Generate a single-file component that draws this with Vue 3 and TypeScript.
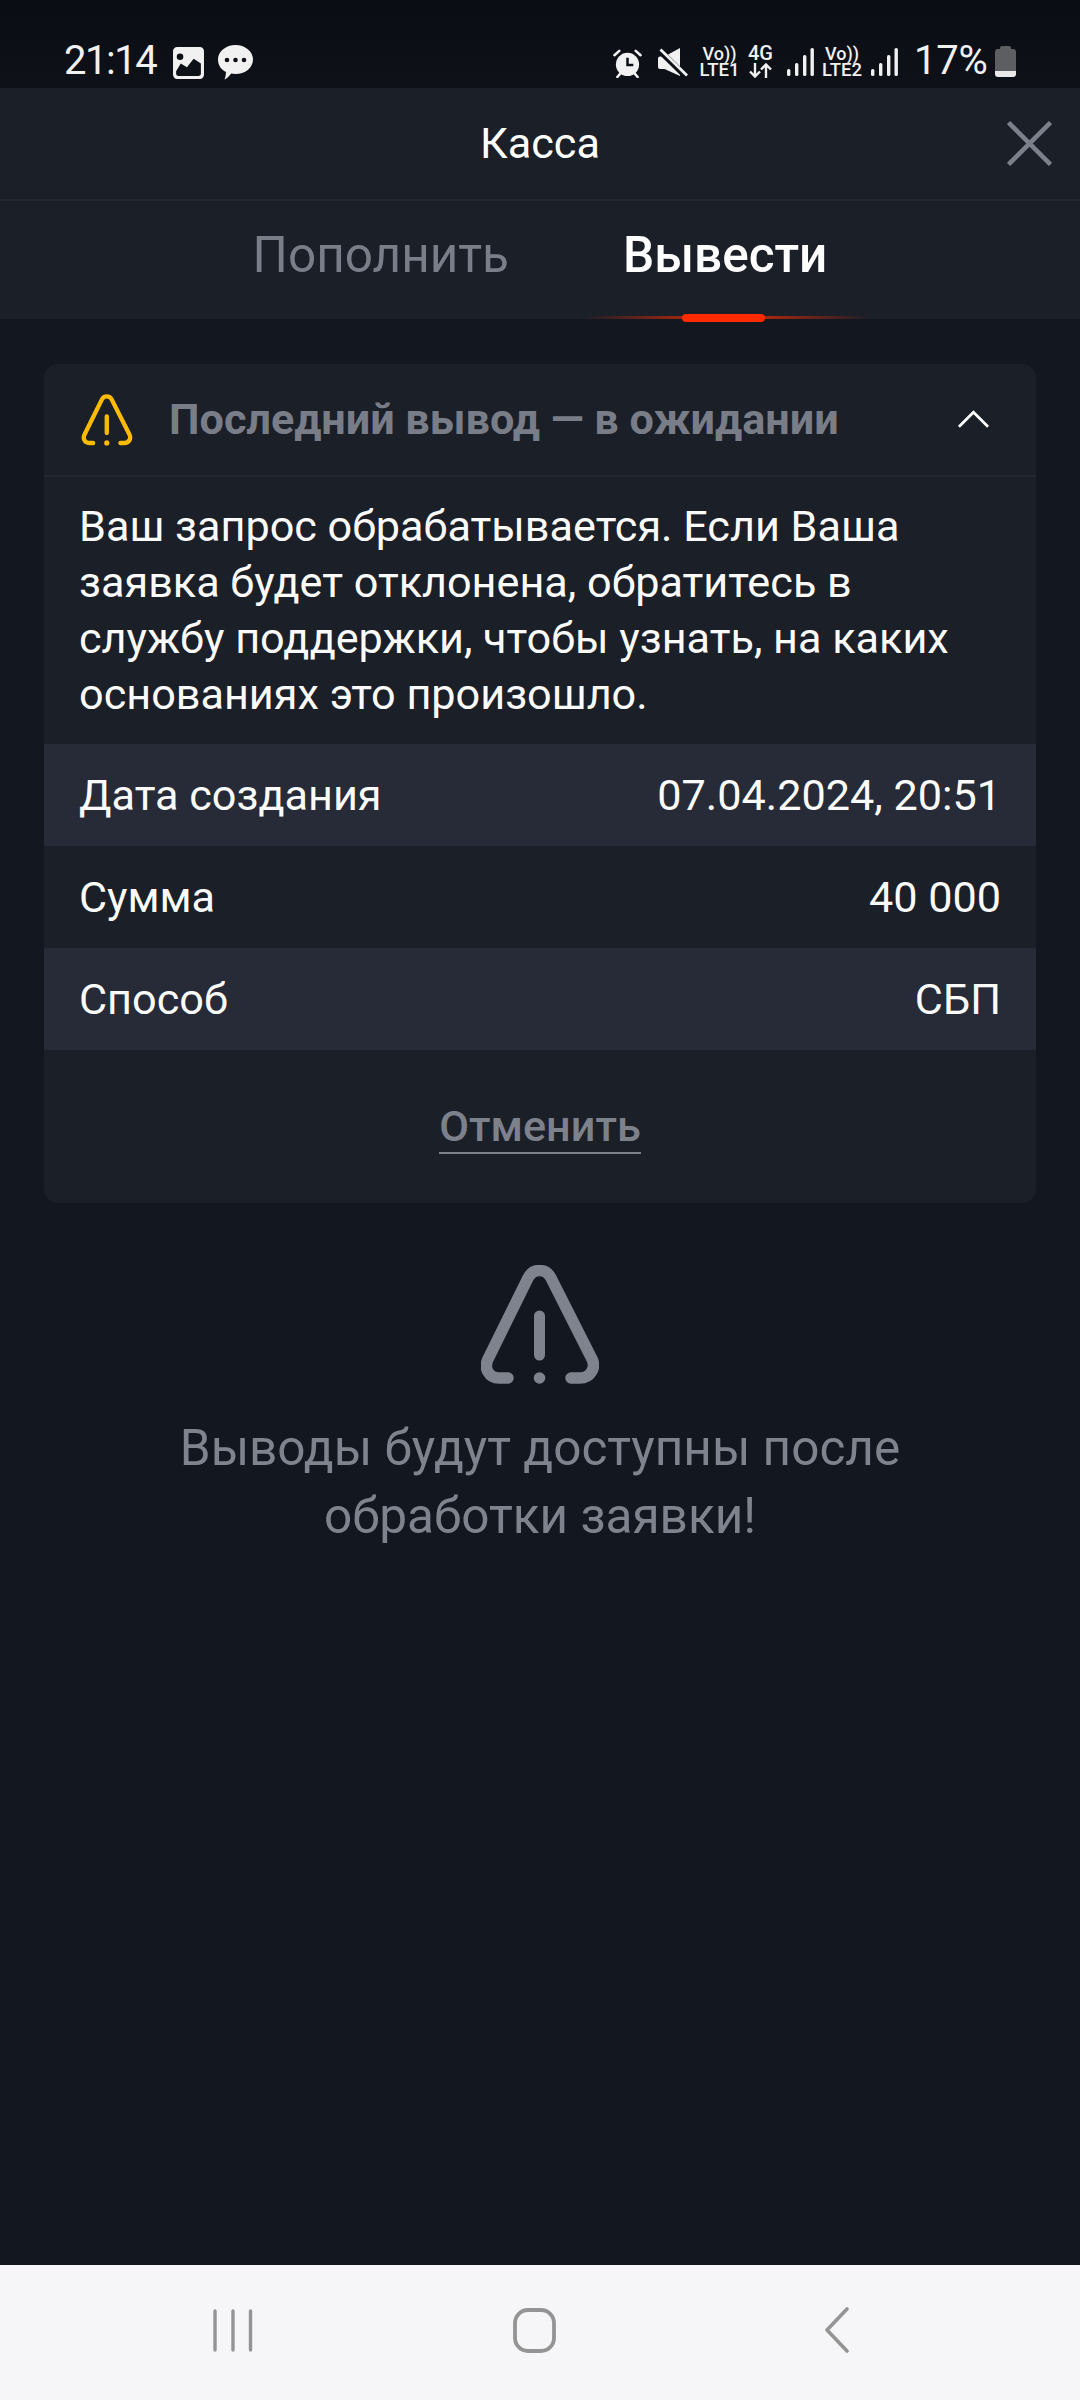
<template>
  <div class="screen">
    <!-- status bar -->
    <div class="status">
      <span class="clock">21:14</span>
      <svg class="ic-img" viewBox="0 0 30 31">
        <path fill-rule="evenodd" fill="#f1f1f1" d="M4 0H26a4 4 0 0 1 4 4V27a4 4 0 0 1-4 4H4a4 4 0 0 1-4-4V4a4 4 0 0 1 4-4ZM3 23.500v2.500a2 2 0 0 0 2 2H25a2 2 0 0 0 2-2V16l-7-4.500-6.500 8-6-3.500ZM10 9.500a3.200 3.200 0 1 0-6.400 0 3.200 3.200 0 0 0 6.400 0Z" />
      </svg>
      <svg class="ic-chat" viewBox="0 0 35 35">
        <path fill="#f1f1f1" d="M17.500 0C27 0 35 6.200 35 14.500 35 23 27 29 17.500 29c-1.500 0-3-.2-4.300-.5C11.500 31 9 33.500 6.500 34.500c1-2.500 1.500-5 1.500-7.500C3 24.500 0 20 0 14.500 0 6.200 8 0 17.500 0Z" />
        <circle cx="9" cy="15" r="2.300" fill="#0d1017" />
        <circle cx="17.500" cy="15" r="2.300" fill="#0d1017" />
        <circle cx="26" cy="15" r="2.300" fill="#0d1017" />
      </svg>
      <div class="status-right">
        <svg class="ic-alarm" viewBox="0 0 30 30">
          <circle cx="15" cy="16" r="12" fill="#f1f1f1" />
          <path d="M15 9v7.500h6" fill="none" stroke="#0d1017" stroke-width="2.600" />
          <path d="M1.500 6.500 6.500 2M28.500 6.500 23.500 2M4.500 29l3-3.500M25.500 29l-3-3.500" stroke="#f1f1f1" stroke-width="2.600" stroke-linecap="round" />
        </svg>
        <svg class="ic-mute" viewBox="0 0 30 29">
          <path fill="#f1f1f1" d="M0 10.500a2 2 0 0 1 2-2H6.500L22 0V28L6.500 21H2a2 2 0 0 1-2-2Z" />
          <path d="M0 1 28 28.500" stroke="#0d1017" stroke-width="6" />
          <path d="M2.500 1.500 29 27.500" stroke="#f1f1f1" stroke-width="2.800" />
        </svg>
        <div class="net vo"><span>Vo))</span><span class="lte">LTE1</span></div>
        <div class="net fourg">
          <span>4G</span>
          <svg class="arrows" viewBox="0 0 25 15">
            <path d="M7 0V13M2 8.500 7 13.500 12 8.500M18 15V2M13 6.500 18 1.500 23 6.500" fill="none" stroke="#f1f1f1" stroke-width="2.400" />
          </svg>
        </div>
        <svg class="ic-signal" viewBox="0 0 27 29">
          <rect v-for="b in signalBars" :key="b.x" :x="b.x" :y="b.y" width="3.400" :height="28 - b.y" rx="1.500" fill="#f1f1f1" />
        </svg>
        <div class="net vo two"><span>Vo))</span><span class="lte">LTE2</span></div>
        <svg class="ic-signal" viewBox="0 0 27 29">
          <rect v-for="b in signalBars" :key="b.x" :x="b.x" :y="b.y" width="3.400" :height="28 - b.y" rx="1.500" fill="#f1f1f1" />
        </svg>
        <span class="percent">17%</span>
        <div class="battery"></div>
      </div>
    </div>

    <!-- шапка кассы -->
    <header class="top">
      <span class="title">Касса</span>
      <svg class="close" viewBox="0 0 44 44">
        <path d="M1.500 1.500 42.500 42.500M42.500 1.500 1.500 42.500" stroke="#7c808a" stroke-width="4.400" fill="none" />
      </svg>
    </header>
    <nav class="tabs">
      <span class="tab">Пополнить</span>
      <span class="tab active">Вывести</span>
      <div class="glow"></div>
      <div class="marker"></div>
    </nav>

    <main class="content">
      <section class="card">
        <div class="card-head">
          <svg class="warn-small" viewBox="0 0 118 120">
            <path :d="warnPath" fill="none" stroke="#fdbb00" stroke-width="10" stroke-linecap="round" />
            <path d="M58.500 52V90" stroke="#fdbb00" stroke-width="10" stroke-linecap="round" />
            <circle cx="58.500" cy="113" r="6" fill="#fdbb00" />
          </svg>
          <span class="card-title">Последний вывод — в ожидании</span>
          <svg class="chevron" viewBox="0 0 34 20">
            <path d="M2 18 17 3 32 18" fill="none" stroke="#fff" stroke-width="2.800" />
          </svg>
        </div>
        <p class="note">Ваш запрос обрабатывается. Если Ваша заявка будет отклонена, обратитесь в службу поддержки, чтобы узнать, на каких основаниях это произошло.</p>
        <div v-for="row in rows" :key="row.label" class="row">
          <span>{{ row.label }}</span>
          <span>{{ row.value }}</span>
        </div>
        <div class="cancel-wrap"><span class="cancel">Отменить</span></div>
      </section>

      <div class="notice">
        <svg class="warn-big" viewBox="0 0 118 120">
          <path :d="warnPath" fill="none" stroke="#7f838d" stroke-width="11.500" stroke-linecap="round" />
          <path d="M58.500 51V90" stroke="#7f838d" stroke-width="11" stroke-linecap="round" />
          <circle cx="58.500" cy="113" r="5.800" fill="#7f838d" />
        </svg>
        <p>Выводы будут доступны после<br />обработки заявки!</p>
      </div>
    </main>

    <!-- системная навигация -->
    <footer class="sysnav">
      <svg class="nav-recent" viewBox="0 0 42 44">
        <path d="M3 2V41M21 2V41M38.500 2V41" stroke="#949494" stroke-width="3.400" stroke-linecap="round" />
      </svg>
      <svg class="nav-home" viewBox="0 0 44 46">
        <rect x="2" y="2" width="39" height="41" rx="13" fill="none" stroke="#949494" stroke-width="3.800" />
      </svg>
      <svg class="nav-back" viewBox="0 0 26 46">
        <path d="M23 2 3 23 23 44" fill="none" stroke="#949494" stroke-width="3.600" stroke-linecap="round" stroke-linejoin="round" />
      </svg>
    </footer>
  </div>
</template>

<script setup lang="ts">
interface Row {
  label: string
  value: string
}

const rows: Row[] = [
  { label: 'Дата создания', value: '07.04.2024, 20:51' },
  { label: 'Сумма', value: '40 000' },
  { label: 'Способ', value: 'СБП' },
]

const signalBars = [
  { x: 0, y: 21 },
  { x: 8, y: 15 },
  { x: 16, y: 7 },
  { x: 23.5, y: 0 },
]

const warnPath =
  'M27 113H18C8 113 2 103 7.500 93L47 13C52 3 65 3 70 13L110.500 93C116 103 109 113 99 113H90'
</script>

<style scoped>
.screen {
  width: 1080px;
  height: 2400px;
  display: flex;
  flex-direction: column;
  background: #13171f;
  color: #fff;
  font-family: Roboto, "Liberation Sans", sans-serif;
}

.status {
  height: 88px;
  flex: none;
  box-sizing: border-box;
  padding: 43px 0 0 64px;
  display: flex;
  align-items: flex-start;
  background: linear-gradient(#0a0d13, #0e1118);
  color: #f1f1f1;
}
.clock {
  font-size: 40px;
  line-height: 36px;
  letter-spacing: -1.5px;
  width: 109px;
}
.ic-img {
  width: 31px;
  height: 32px;
  margin-top: 4px;
}
.ic-chat {
  width: 35px;
  height: 35px;
  margin: 2px 0 0 14px;
}
.status-right {
  display: flex;
  align-items: flex-start;
  margin-left: 360px;
}
.ic-alarm {
  width: 29px;
  height: 29px;
  margin-top: 6px;
}
.ic-mute {
  width: 30px;
  height: 29px;
  margin: 5px 0 0 16px;
}
.net {
  display: flex;
  flex-direction: column;
  align-items: center;
  margin-top: 2px;
  font-size: 18px;
  line-height: 17px;
  font-weight: 500;
}
.vo {
  width: 39px;
  margin-left: 12px;
}
.vo.two {
  width: 40px;
  margin-left: 8px;
}
.lte {
  font-size: 18.5px;
}
.fourg {
  width: 25px;
  margin-left: 9px;
  font-size: 20px;
}
.arrows {
  width: 25px;
  height: 15px;
  margin-top: 1px;
}
.ic-signal {
  width: 27px;
  height: 29px;
  margin: 5px 0 0 14px;
}
.vo.two + .ic-signal {
  margin-left: 9px;
}
.percent {
  font-size: 40px;
  line-height: 36px;
  margin-left: 16px;
  width: 73px;
  letter-spacing: -0.2px;
}
.battery {
  position: relative;
  width: 21px;
  height: 28px;
  margin: 6px 0 0 8px;
  border-radius: 3px;
  background: linear-gradient(#5d5e62 80%, #e9e9e9 80%);
}
.battery::before {
  content: "";
  position: absolute;
  left: 5px;
  top: -3px;
  width: 11px;
  height: 4px;
  border-radius: 2px 2px 0 0;
  background: #5d5e62;
}

.top {
  height: 111px;
  flex: none;
  display: flex;
  align-items: center;
  justify-content: center;
  position: relative;
  background: #1b1f28;
  border-bottom: 2px solid #232732;
}
.title {
  font-size: 43.2px;
}
.close {
  position: absolute;
  right: 28px;
  top: 33px;
  width: 45px;
  height: 45px;
}

.tabs {
  position: relative;
  height: 118px;
  flex: none;
  box-sizing: border-box;
  padding-top: 22px;
  display: flex;
  justify-content: center;
  gap: 114px;
  background: #1b1f28;
  font-size: 49.5px;
  line-height: 64px;
}
.tab {
  color: #7a7e89;
}
.tab.active {
  color: #fff;
  font-weight: 500;
}
.glow {
  position: absolute;
  left: 585px;
  bottom: 0;
  width: 285px;
  height: 3px;
  background: linear-gradient(90deg, transparent, #a3260f 35%, #c52a0c 50%, #a3260f 65%, transparent);
}
.marker {
  position: absolute;
  left: 682px;
  bottom: -3px;
  width: 83px;
  height: 8px;
  border-radius: 4px;
  background: #ff2a00;
}

.content {
  flex: 1;
  padding: 45px 44px 0;
}
.card {
  background: #1b1f28;
  border-radius: 14px;
  overflow: hidden;
}
.card-head {
  height: 113px;
  box-sizing: border-box;
  display: flex;
  align-items: center;
  padding: 0 46px 0 37px;
  border-bottom: 2px solid #232732;
}
.warn-small {
  width: 52px;
  height: 52px;
  flex: none;
}
.card-title {
  flex: 1;
  margin-left: 36px;
  font-size: 43.2px;
  font-weight: 700;
  color: #797d88;
}
.chevron {
  width: 33px;
  height: 20px;
  margin-bottom: 2px;
}
.note {
  margin: 0;
  padding: 22px 35px 21px;
  font-size: 43.2px;
  line-height: 56px;
  color: #fbfbfb;
}
.row {
  height: 102px;
  display: flex;
  align-items: center;
  justify-content: space-between;
  padding: 0 35px;
  box-sizing: border-box;
  font-size: 43.2px;
  color: #fbfbfb;
}
.row:nth-of-type(even) {
  background: #262b37;
}
.cancel-wrap {
  height: 153px;
  display: flex;
  justify-content: center;
  padding-top: 50px;
  box-sizing: border-box;
}
.cancel {
  height: 52px;
  font-size: 43.2px;
  line-height: 54px;
  font-weight: 500;
  color: #7d818c;
  border-bottom: 2px solid #7d818c;
}

.notice {
  margin-top: 62px;
  text-align: center;
}
.warn-big {
  display: block;
  width: 118px;
  height: 120px;
  margin: 0 auto;
}
.notice p {
  margin: 29px 0 0;
  font-size: 49.5px;
  line-height: 68px;
  color: #7f838d;
}

.sysnav {
  height: 135px;
  flex: none;
  position: relative;
  background: #f6f6f8;
}
.sysnav svg {
  position: absolute;
}
.nav-recent {
  left: 212px;
  top: 44px;
  width: 42px;
  height: 44px;
}
.nav-home {
  left: 513px;
  top: 43px;
  width: 44px;
  height: 46px;
}
.nav-back {
  left: 824px;
  top: 42px;
  width: 26px;
  height: 46px;
}
</style>

<style>
html,
body {
  margin: 0;
  background: #13171f;
}
</style>
